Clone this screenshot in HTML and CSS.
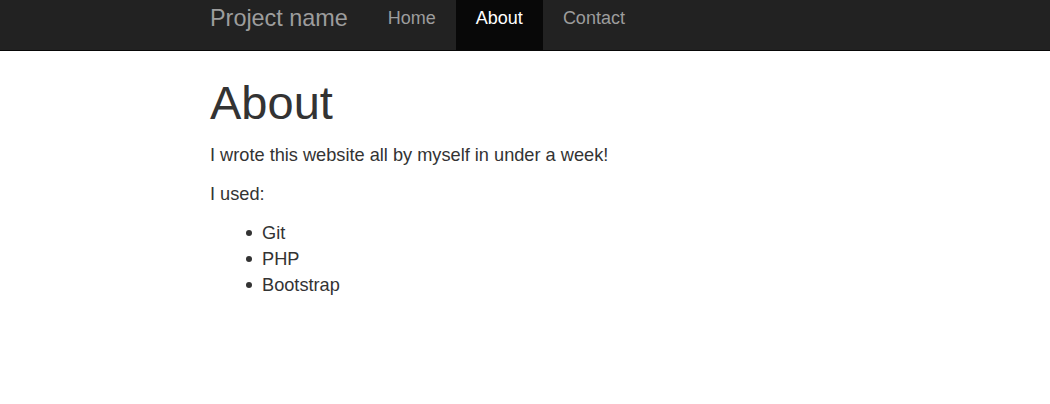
FILE: index.html
```html
<!DOCTYPE html>
<html>
<head>
<meta charset="utf-8">
<link rel="stylesheet" href="styles.css">
</head>
<body>
<nav class="navbar">
  <div class="container nav-inner">
    <a class="brand" href="#">Project name</a>
    <ul class="nav">
      <li><a href="#">Home</a></li>
      <li class="active"><a href="#">About</a></li>
      <li><a href="#">Contact</a></li>
    </ul>
  </div>
</nav>
<main class="container content">
  <h1>About</h1>
  <p>I wrote this website all by myself in under a week!</p>
  <p>I used:</p>
  <ul class="list">
    <li>Git</li>
    <li>PHP</li>
    <li>Bootstrap</li>
  </ul>
</main>
</body>
</html>
```
FILE: styles.css
```css
html, body {
  margin: 0;
  padding: 0;
  background: #fff;
}
body {
  font-family: "Liberation Sans", Arial, sans-serif;
  font-size: 18.2px;
  color: #333;
  line-height: 26px;
}
.container {
  margin-left: 210px;
  width: 630px;
}
.navbar {
  height: 51px;
  background: #222;
  border-bottom: 1px solid #080808;
  box-sizing: border-box;
}
.nav-inner {
  display: flex;
  height: 50px;
}
.brand {
  font-size: 23.4px;
  line-height: 36px;
  color: #9d9d9d;
  text-decoration: none;
  margin-right: 20px;
}
.nav {
  display: flex;
  list-style: none;
  margin: 0;
  padding: 0;
}
.nav li a {
  display: block;
  height: 50px;
  padding: 0 20px;
  font-size: 18px;
  line-height: 36px;
  color: #9d9d9d;
  text-decoration: none;
}
.nav li.active a {
  background: #080808;
  color: #fff;
}
.content h1 {
  font-size: 47px;
  font-weight: 500;
  line-height: 52px;
  margin: 26px 0 13px;
}
.content p {
  margin: 0 0 13px;
}
.list {
  margin: 0;
  padding-left: 52px;
  list-style: none;
}
.list li::before {
  content: "";
  display: inline-block;
  width: 6px;
  height: 6px;
  border-radius: 50%;
  background: #333;
  margin-left: -16px;
  margin-right: 10px;
  vertical-align: 3px;
}
```
